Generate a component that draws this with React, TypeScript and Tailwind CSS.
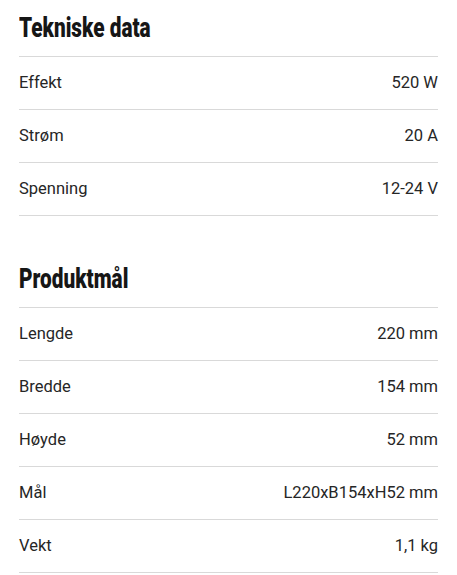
type Row = { label: string; value: string };

const tekniske: Row[] = [
  { label: "Effekt", value: "520 W" },
  { label: "Strøm", value: "20 A" },
  { label: "Spenning", value: "12-24 V" },
];

const produktmal: Row[] = [
  { label: "Lengde", value: "220 mm" },
  { label: "Bredde", value: "154 mm" },
  { label: "Høyde", value: "52 mm" },
  { label: "Mål", value: "L220xB154xH52 mm" },
  { label: "Vekt", value: "1,1 kg" },
];

function Section({ title, rows }: { title: string; rows: Row[] }) {
  return (
    <section>
      {/* condensed display face isn't installed, squeeze Roboto instead */}
      <h2 className="pt-[12px] pb-[12px] text-[27px] leading-[32px] font-black text-[#161616]">
        <span className="inline-block origin-left scale-x-[0.77] whitespace-nowrap">
          {title}
        </span>
      </h2>
      <div className="border-b border-[#d9d9d9]">
        {rows.map((row, i) => (
          <div
            key={i}
            className="flex h-[53px] items-center justify-between border-t border-[#d9d9d9]"
          >
            <span>{row.label}</span>
            <span>{row.value}</span>
          </div>
        ))}
      </div>
    </section>
  );
}

export default function App() {
  return (
    <div className="min-h-screen bg-white px-[19px] text-[16.5px] text-[#262626] [font-family:Roboto,sans-serif]">
      <Section title="Tekniske data" rows={tekniske} />
      <div className="mt-[35px]">
        <Section title="Produktmål" rows={produktmal} />
      </div>
    </div>
  );
}
